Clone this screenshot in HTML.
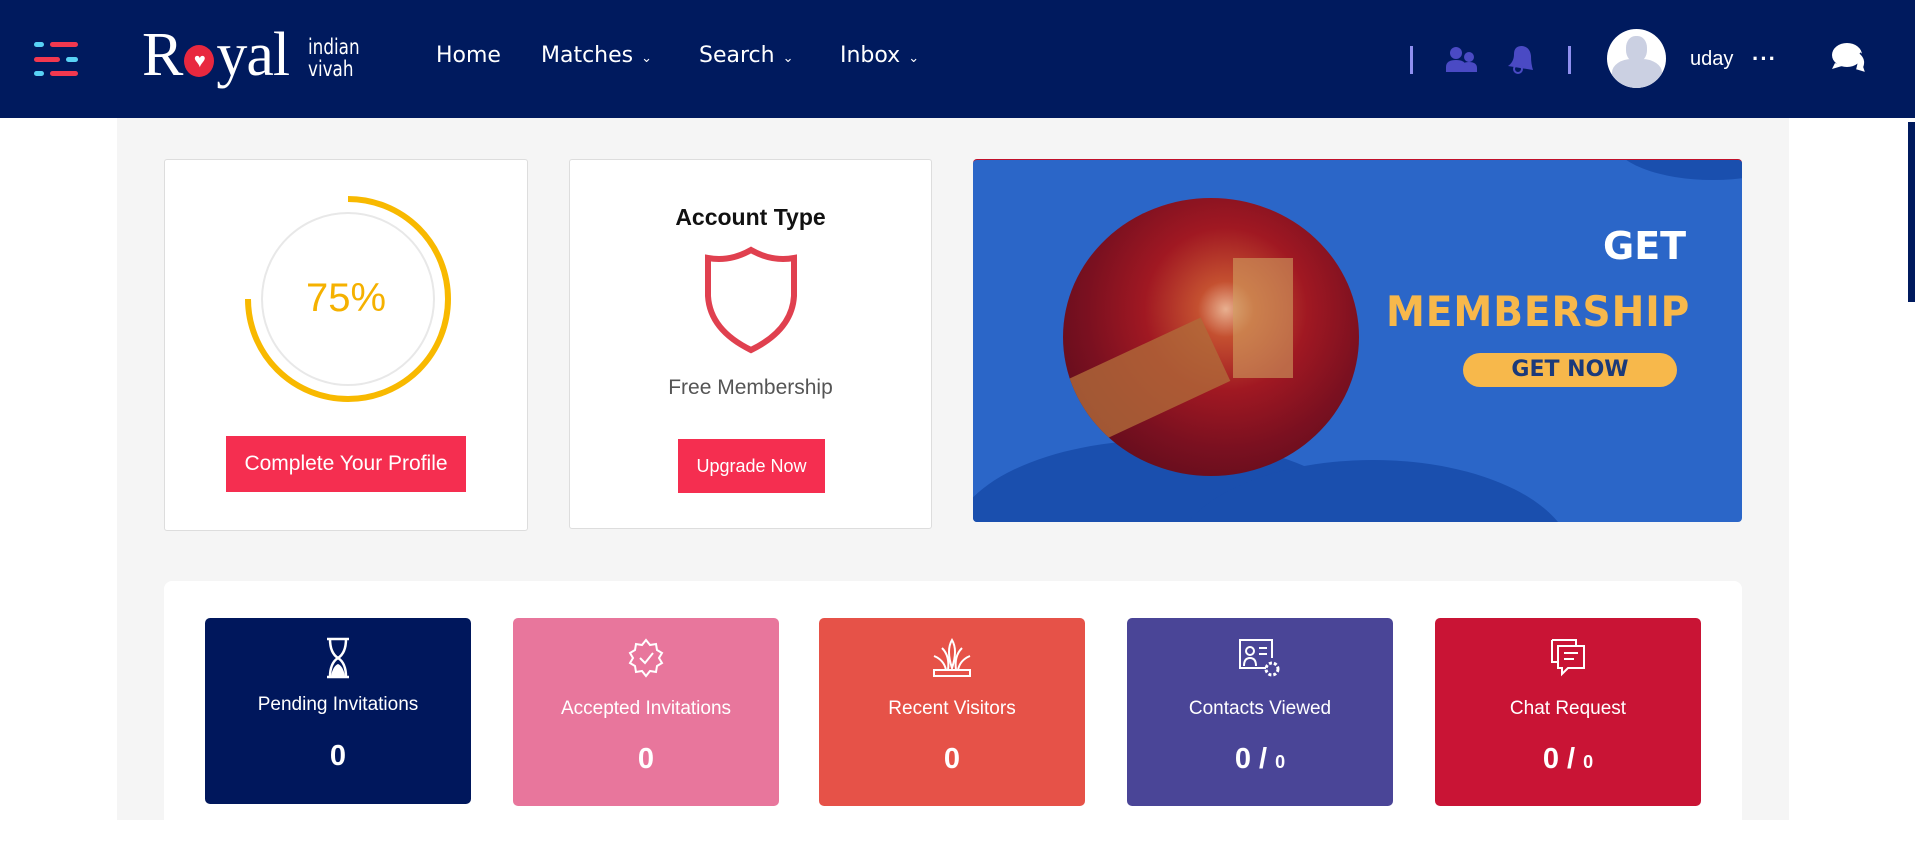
<!DOCTYPE html>
<html><head><meta charset="utf-8"><style>
*{margin:0;padding:0;box-sizing:border-box}
body{width:1915px;height:820px;overflow:hidden;background:#fff;font-family:"Liberation Sans",sans-serif;position:relative}
.hdr{position:absolute;left:0;top:0;width:1915px;height:118px;background:#001a5e}
.abs{position:absolute}
.nav{position:absolute;top:43px;color:#fff;font-size:22px;font-family:"DejaVu Sans","Liberation Sans",sans-serif;font-weight:500}
.nav small{font-size:13px;margin-left:8px}
.gray{position:absolute;left:117px;top:118px;width:1672px;height:702px;background:#f5f5f5}
.card{position:absolute;background:#fff;border:1px solid #ddd;border-radius:3px}
.btn{position:absolute;background:#f52e50;color:#fff;text-align:center}
.stat{position:absolute;top:618px;height:188px;width:266px;border-radius:5px;color:#fff;text-align:center}
.stat .ic{position:absolute;left:0;right:0;top:18px;height:44px}
.stat .lb{position:absolute;left:0;right:0;top:80px;font-size:19px}
.stat .n{position:absolute;left:0;right:0;top:125px;font-size:29px;font-weight:bold}
.stat .n small{font-size:18px}
</style></head><body>
<div class="hdr">
 <div class="abs" style="left:34px;top:42px;width:10px;height:5px;background:#58d2f5;border-radius:3px"></div>
 <div class="abs" style="left:50px;top:42px;width:28px;height:5px;background:#f2384f;border-radius:3px"></div>
 <div class="abs" style="left:34px;top:57px;width:26px;height:5px;background:#f2384f;border-radius:3px"></div>
 <div class="abs" style="left:66px;top:57px;width:12px;height:5px;background:#58d2f5;border-radius:3px"></div>
 <div class="abs" style="left:34px;top:71px;width:10px;height:5px;background:#58d2f5;border-radius:3px"></div>
 <div class="abs" style="left:50px;top:71px;width:28px;height:5px;background:#f2384f;border-radius:3px"></div>
 <div class="abs" style="left:142px;top:24px;color:#fff;font-family:'Liberation Serif',serif;font-size:62px;line-height:62px;letter-spacing:-1px">R<span style="display:inline-block;width:30px;height:32px;border-radius:50%;background:#e8283f;vertical-align:middle;color:#fff;font-size:20px;text-align:center;line-height:32px;margin:0 2px">♥</span>yal</div>
 <div class="abs" style="left:308px;top:36px;color:#fff;font-size:21px;line-height:22px;font-family:'DejaVu Sans',sans-serif;transform:scaleX(.8);transform-origin:left">indian<br>vivah</div>
 <div class="nav" style="left:436px">Home</div>
 <div class="nav" style="left:541px">Matches<small>⌄</small></div>
 <div class="nav" style="left:699px">Search<small>⌄</small></div>
 <div class="nav" style="left:840px">Inbox<small>⌄</small></div>
 <div class="abs" style="left:1410px;top:46px;width:3px;height:28px;background:#8f8ff0"></div>
 <svg class="abs" style="left:1446px;top:46px" width="32" height="26" viewBox="0 0 32 26"><circle cx="10" cy="7" r="6" fill="#4a4ac4"/><path d="M0 26v-5c0-5 4-7 10-7s10 2 10 7v5z" fill="#4a4ac4"/><circle cx="23" cy="11" r="5" fill="#4a4ac4"/><path d="M15 26v-4c0-4 3-6 8-6s8 2 8 6v4z" fill="#4a4ac4"/></svg>
 <svg class="abs" style="left:1506px;top:44px" width="28" height="30" viewBox="0 0 28 30"><path d="M2 22 Q8 18 8 10 Q8 2 16 2 Q24 3 25 12 Q25 20 27 26 Z" fill="#4a4ac4"/><circle cx="12" cy="25" r="4" fill="none" stroke="#4a4ac4" stroke-width="2"/></svg>
 <div class="abs" style="left:1568px;top:46px;width:3px;height:28px;background:#8f8ff0"></div>
 <div class="abs" style="left:1607px;top:29px;width:59px;height:59px;border-radius:50%;background:#fff;overflow:hidden">
  <div class="abs" style="left:19px;top:7px;width:21px;height:26px;border-radius:45%;background:#cbd0e2"></div>
  <div class="abs" style="left:5px;top:30px;width:50px;height:34px;border-radius:40% 40% 0 0;background:#cbd0e2"></div>
 </div>
 <div class="abs" style="left:1690px;top:48px;color:#fff;font-size:20px">uday</div>
 <div class="abs" style="left:1752px;top:46px;color:#fff;font-size:22px;font-weight:bold;letter-spacing:1px">···</div>
 <svg class="abs" style="left:1830px;top:41px" width="38" height="34" viewBox="0 0 38 34"><ellipse cx="17" cy="14" rx="15" ry="12" fill="#fff"/><path d="M5 22 L2 28 L12 25z" fill="#fff"/><path d="M30 12 Q37 18 34 26 L36 32 L26 29" fill="#fff" stroke="#001a5e" stroke-width="1.5"/></svg>
</div>
<div class="abs" style="left:1908px;top:122px;width:7px;height:180px;background:#001a5e"></div>
<div class="gray"></div>
<div class="card" style="left:164px;top:159px;width:364px;height:372px">
 <svg class="abs" style="left:78px;top:34px" width="210" height="210" viewBox="0 0 210 210"><circle cx="105" cy="105" r="86" fill="none" stroke="#e8e8e8" stroke-width="2"/><path d="M105 5 A100 100 0 1 1 105 205" fill="none" stroke="#f8b900" stroke-width="6"/><path d="M105 205 A100 100 0 0 1 5 105" fill="none" stroke="#f8b900" stroke-width="6"/></svg>
 <div class="abs" style="left:0;right:0;top:116px;text-align:center;color:#f5b100;font-size:40px">75%</div>
 <div class="btn" style="left:61px;top:276px;width:240px;height:56px;line-height:56px;font-size:21px">Complete Your Profile</div>
</div>
<div class="card" style="left:569px;top:159px;width:363px;height:370px">
 <div class="abs" style="left:0;right:0;top:44px;text-align:center;font-size:23px;font-weight:bold;color:#111">Account Type</div>
 <svg class="abs" style="left:134px;top:86px" width="94" height="108" viewBox="0 0 94 108"><path d="M47 4 Q68 16 90 12 L90 50 Q88 84 47 104 Q6 84 4 50 L4 12 Q26 16 47 4z" fill="none" stroke="#e0404f" stroke-width="6"/></svg>
 <div class="abs" style="left:0;right:0;top:216px;text-align:center;font-size:21px;color:#555">Free Membership</div>
 <div class="btn" style="left:108px;top:279px;width:147px;height:54px;line-height:54px;font-size:18px">Upgrade Now</div>
</div>
<div class="abs" style="left:973px;top:159px;width:769px;height:363px;background:#2b66c8;border-radius:4px;overflow:hidden;border-top:1px solid #c0102a">
 <div class="abs" style="left:-20px;top:280px;width:420px;height:200px;border-radius:50%;background:#1a4fae"></div>
 <div class="abs" style="left:200px;top:300px;width:400px;height:200px;border-radius:50%;background:#1a4fae"></div>
 <div class="abs" style="left:640px;top:-60px;width:200px;height:80px;border-radius:50%;background:#1a4fae"></div>
 <div class="abs" style="left:90px;top:38px;width:296px;height:278px;border-radius:50%;background:radial-gradient(circle at 55% 40%,#e8b090 0,#c45030 12%,#a01822 35%,#7a1020 60%,#4a0a18 100%);overflow:hidden">
  <div class="abs" style="left:0;top:150px;width:160px;height:70px;background:#b06a3a;transform:rotate(-25deg);opacity:.8"></div>
  <div class="abs" style="left:170px;top:60px;width:60px;height:120px;background:#d0a060;opacity:.6"></div>
 </div>
 <div class="abs" style="left:630px;top:64px;color:#fff;font-size:38px;font-weight:bold;font-family:'DejaVu Sans',sans-serif">GET</div>
 <div class="abs" style="left:413px;top:127px;color:#f7b84b;font-size:42px;font-weight:bold;font-family:'DejaVu Sans',sans-serif;letter-spacing:1px;transform:scaleX(.93);transform-origin:left">MEMBERSHIP</div>
 <div class="abs" style="left:490px;top:193px;width:214px;height:34px;border-radius:17px;background:#f7b84b;color:#1b3a7a;font-size:22px;font-weight:bold;text-align:center;line-height:34px;font-family:'DejaVu Sans',sans-serif">GET NOW</div>
</div>
<div class="abs" style="left:164px;top:581px;width:1578px;height:260px;background:#fff;border-radius:8px"></div>
<div class="stat" style="left:205px;background:#00175c;height:186px"><svg class="ic" viewBox="0 0 40 44" style="left:113px;width:40px"><path d="M9 3h22M9 41h22M12 3q0 14 8 19q-8 5-8 19M28 3q0 14-8 19q8 5 8 19" fill="none" stroke="#fff" stroke-width="2.5"/><path d="M13 40q2-10 7-12q5 2 7 12z" fill="#fff"/></svg><div class="lb" style="top:76px">Pending Invitations</div><div class="n" style="top:122px">0</div></div>
<div class="stat" style="left:513px;background:#e8769c"><svg class="ic" viewBox="0 0 40 44" style="left:113px;width:40px"><path d="M20 4l4 5 6-1 1 6 5 3-3 5 3 5-5 3-1 6-6-1-4 5-4-5-6 1-1-6-5-3 3-5-3-5 5-3 1-6 6 1z" fill="none" stroke="#fff" stroke-width="2"/><path d="M14 22l5 5 8-10" fill="none" stroke="#fff" stroke-width="2"/></svg><div class="lb">Accepted Invitations</div><div class="n">0</div></div>
<div class="stat" style="left:819px;background:#e65248"><svg class="ic" viewBox="0 0 48 44" style="left:109px;width:48px"><path d="M24 4q6 10 0 28q-6-18 0-28zM14 12q8 8 6 22M34 12q-8 8-6 22M6 20q10 4 12 14M42 20q-10 4-12 14" fill="none" stroke="#fff" stroke-width="2"/><rect x="6" y="34" width="36" height="6" fill="none" stroke="#fff" stroke-width="2"/></svg><div class="lb">Recent Visitors</div><div class="n">0</div></div>
<div class="stat" style="left:1127px;background:#4a4597"><svg class="ic" viewBox="0 0 48 44" style="left:109px;width:48px"><path d="M30 32H4V4h32v18" fill="none" stroke="#fff" stroke-width="2"/><circle cx="14" cy="15" r="4" fill="none" stroke="#fff" stroke-width="2"/><path d="M8 30q0-8 6-8t6 8M23 12h8M23 18h8" fill="none" stroke="#fff" stroke-width="2"/><circle cx="36" cy="33" r="6" fill="none" stroke="#fff" stroke-width="3" stroke-dasharray="3 2"/></svg><div class="lb">Contacts Viewed</div><div class="n">0 / <small>0</small></div></div>
<div class="stat" style="left:1435px;background:#c91435"><svg class="ic" viewBox="0 0 44 44" style="left:111px;width:44px"><path d="M6 4h24v6M6 4v22h6" fill="none" stroke="#fff" stroke-width="2"/><path d="M12 10h26v22H22l-6 6v-6h-4z" fill="none" stroke="#fff" stroke-width="2"/><path d="M18 17h14M18 23h10" stroke="#fff" stroke-width="2"/></svg><div class="lb">Chat Request</div><div class="n">0 / <small>0</small></div></div>
</body></html>
